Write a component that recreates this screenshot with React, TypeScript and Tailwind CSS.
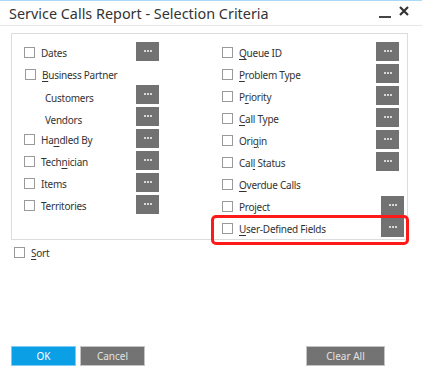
import React from "react";

const font = { fontFamily: '"Noto Sans", "Open Sans", sans-serif' };

function Box() {
  return <span className="block w-[11px] h-[11px] border border-[#9a9a9a] bg-white shrink-0" />;
}

function Dots() {
  return (
    <button className="w-[23px] h-[19px] bg-[#727272] flex items-center justify-center gap-[1px] shrink-0">
      <span className="w-[2px] h-[2px] bg-[#d8d8d8]" />
      <span className="w-[2px] h-[2px] bg-[#d8d8d8]" />
      <span className="w-[2px] h-[2px] bg-[#d8d8d8]" />
    </button>
  );
}

function Label({ pre, u, post }: { pre?: string; u?: string; post?: string }) {
  return (
    <span className="text-[10px] tracking-[-0.25px] text-[#333] leading-none whitespace-nowrap">
      {pre}
      {u && <span className="underline underline-offset-[2px]">{u}</span>}
      {post}
    </span>
  );
}

function Check({ children }: { children: React.ReactNode }) {
  return (
    <div className="flex items-center gap-[6px] mt-[3px]">
      <Box />
      {children}
    </div>
  );
}

export default function App() {
  return (
    <div className="w-[422px] h-[379px] bg-white relative overflow-hidden" style={font}>
      <div className="h-[1px] bg-[#a9dbf6]" />
      <div className="h-[25px] flex items-center justify-between pl-[9px] pr-[13px] border-b border-[#e6e6e6]">
        <span className="text-[14.4px] text-[#333] leading-none pt-[3px]">Service Calls Report - Selection Criteria</span>
        <div className="flex items-center gap-[8px]">
          <span className="block w-[12px] h-[2px] bg-[#444] mt-[8px]" />
          <svg width="10" height="10" viewBox="0 0 10 10" className="mb-[4px]">
            <path d="M1 1 L9 9 M9 1 L1 9" stroke="#333" strokeWidth="2.2" />
          </svg>
        </div>
      </div>

      <div className="ml-[11px] mt-[7px] w-[397px] h-[207px] border border-[#dcdcdc] flex">
        {/* left column */}
        <div className="w-[198px] pl-[12px] pt-[6px] flex flex-col">
          <div className="h-[22px] flex items-center">
            <div className="w-[112px]"><Check><Label pre="Dates" /></Check></div>
            <Dots />
          </div>
          <div className="h-[21px] flex items-end pb-[3px] pl-[1px]">
            <Check><Label u="B" post="usiness Partner" /></Check>
          </div>
          <div className="h-[22px] flex items-center">
            <div className="w-[112px] pl-[21px] mt-[3px]"><Label pre="Customers" /></div>
            <Dots />
          </div>
          <div className="h-[22px] flex items-center">
            <div className="w-[112px] pl-[21px] mt-[3px]"><Label pre="Vendors" /></div>
            <Dots />
          </div>
          <div className="h-[22px] flex items-center">
            <div className="w-[112px]"><Check><Label pre="Ha" u="n" post="dled By" /></Check></div>
            <Dots />
          </div>
          <div className="h-[22px] flex items-center">
            <div className="w-[112px]"><Check><Label pre="Tech" u="n" post="ician" /></Check></div>
            <Dots />
          </div>
          <div className="h-[22px] flex items-center">
            <div className="w-[112px]"><Check><Label pre="Items" /></Check></div>
            <Dots />
          </div>
          <div className="h-[22px] flex items-center">
            <div className="w-[112px]"><Check><Label pre="Territories" /></Check></div>
            <Dots />
          </div>
        </div>
        {/* right column */}
        <div className="flex-1 pl-[12px] pt-[6px] flex flex-col">
          <div className="h-[22px] flex items-center">
            <div className="w-[154px]"><Check><Label u="Q" post="ueue ID" /></Check></div>
            <Dots />
          </div>
          <div className="h-[22px] flex items-center">
            <div className="w-[154px]"><Check><Label u="P" post="roblem Type" /></Check></div>
            <Dots />
          </div>
          <div className="h-[22px] flex items-center">
            <div className="w-[154px]"><Check><Label pre="P" u="r" post="iority" /></Check></div>
            <Dots />
          </div>
          <div className="h-[22px] flex items-center">
            <div className="w-[154px]"><Check><Label u="C" post="all Type" /></Check></div>
            <Dots />
          </div>
          <div className="h-[22px] flex items-center">
            <div className="w-[154px]"><Check><Label pre="Ori" u="g" post="in" /></Check></div>
            <Dots />
          </div>
          <div className="h-[22px] flex items-center">
            <div className="w-[154px]"><Check><Label pre="Cal" u="l" post=" Status" /></Check></div>
            <Dots />
          </div>
          <div className="h-[22px] flex items-center">
            <div className="w-[154px]"><Check><Label u="O" post="verdue Calls" /></Check></div>
          </div>
          <div className="h-[22px] flex items-center">
            <div className="w-[159px]"><Check><Label pre="Project" /></Check></div>
            <Dots />
          </div>
          <div className="h-[22px] flex items-center">
            <div className="w-[159px]"><Check><Label u="U" post="ser-Defined Fields" /></Check></div>
            <Dots />
          </div>
        </div>
      </div>

      <div className="ml-[14px] mt-[7px]">
        <Check><Label u="S" post="ort" /></Check>
      </div>

      <div className="mt-[88px] ml-[11px] flex items-center">
        <button className="w-[65px] h-[20px] bg-[#0b9fe6] border border-[#7fcaf2] text-white text-[10px] leading-none">OK</button>
        <button className="ml-[4px] w-[65px] h-[20px] bg-[#737373] border border-[#c4c4c4] text-[#e2e2e2] text-[10px] leading-none">Cancel</button>
        <button className="ml-[161px] w-[79px] h-[20px] bg-[#737373] border border-[#c4c4c4] text-[#e2e2e2] text-[10px] leading-none">Clear All</button>
      </div>

      <div className="absolute left-[211px] top-[215px] w-[198px] h-[30px] border-[3px] border-[#ff1a1a] rounded-[5px] pointer-events-none" />
    </div>
  );
}
